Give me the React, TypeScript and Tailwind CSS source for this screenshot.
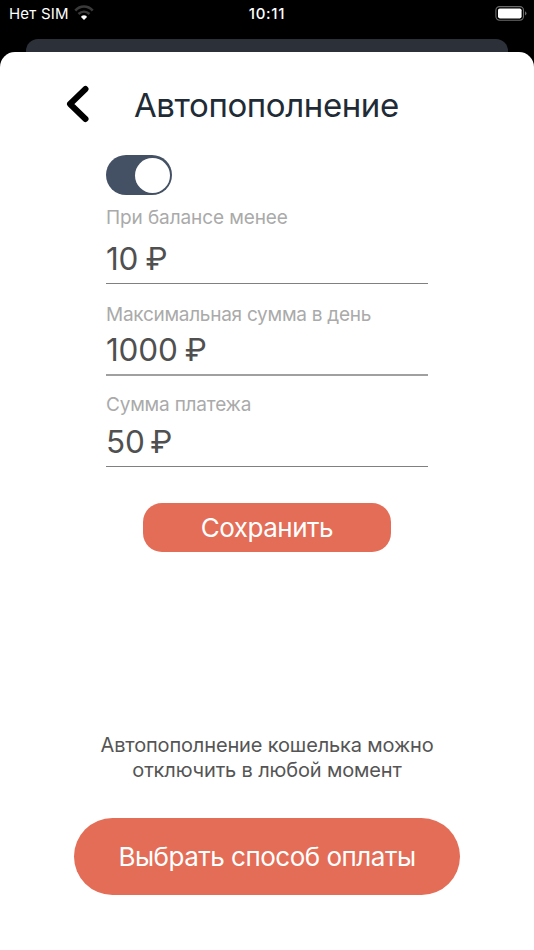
const fields = [
  {
    label: "При балансе менее",
    value: "10 ₽",
    labelClass: "h-[34px] tracking-[-0.1px]",
    valueClass: "h-12 pt-px [word-spacing:-1.5px]",
    lineClass: "mt-[1px] h-px bg-[#808080]",
    gapClass: "mt-[5px]",
  },
  {
    label: "Максимальная сумма в день",
    value: "1000 ₽",
    labelClass: "h-7 tracking-[-0.27px]",
    valueClass: "h-11 [word-spacing:-1.5px]",
    lineClass: "mt-[2px] h-[2px] bg-[#a0a0a0]",
    gapClass: "mt-4",
  },
  {
    label: "Сумма платежа",
    value: "50 ₽",
    labelClass: "h-7 tracking-[-0.2px]",
    valueClass: "h-[46px] pt-px [word-spacing:-3px]",
    lineClass: "mt-[2px] h-px bg-[#808080]",
    gapClass: "mt-[14px]",
  },
];

function StatusBar() {
  return (
    <div className="grid h-[39px] grid-cols-3 items-start pt-[4px] text-[15px] leading-5 text-white">
      <div className="flex items-start pl-[9px]">
        <span className="whitespace-nowrap tracking-[0.2px]">Нет SIM</span>
        <WifiIcon />
      </div>
      <div className="text-center font-medium tracking-[0.7px]">10:11</div>
      <div className="flex justify-end pt-[2px] pr-[7px]">
        <BatteryIcon />
      </div>
    </div>
  );
}

function WifiIcon() {
  return (
    <svg className="ml-[5px] mt-[1px]" width="20" height="16" viewBox="0 0 20 16" fill="none">
      <path d="M1.3 5.6C6.2.2 13.8.2 18.7 5.6" stroke="#3a3a3a" strokeWidth="2.6" />
      <path d="M4.5 9C7.8 5.9 12.2 5.9 15.5 9" stroke="#3a3a3a" strokeWidth="2.5" />
      <path d="M7 12Q7.3 10.3 10 10.3T13 12L10 15Z" fill="#fff" />
    </svg>
  );
}

function BatteryIcon() {
  return (
    <svg width="32" height="15" viewBox="0 0 32 15" fill="none">
      <rect x=".9" y=".6" width="27.6" height="13.6" rx="3.6" stroke="#6b6b6b" strokeWidth="1.1" />
      <rect x="3" y="2.4" width="23.6" height="10" rx="1.8" fill="#fff" />
      <path d="M30 5.2Q33 7.4 30 9.6Z" fill="#6b6b6b" />
    </svg>
  );
}

function Field({ field }: { field: (typeof fields)[number] }) {
  return (
    <div className={field.gapClass}>
      <div className={`flex items-center pt-[2px] text-[19px] text-[#aaaaaa] ${field.labelClass}`}>
        {field.label}
      </div>
      <div className={`flex items-center text-[31.5px] tracking-[-0.2px] text-[#505050] ${field.valueClass}`}>
        {field.value}
      </div>
      <div className={field.lineClass} />
    </div>
  );
}

export default function App() {
  return (
    <div className="flex h-[950px] w-[534px] flex-col overflow-hidden bg-black font-['Inter',sans-serif]">
      <StatusBar />

      {/* Card peeking out behind the sheet */}
      <div className="mx-[26px] h-[13px] shrink-0 rounded-t-[12px] bg-[#2c3038]" />

      <main className="flex flex-1 flex-col rounded-t-[15px] bg-white">
        <header className="flex h-[103px] items-center pl-[66px]">
          <button className="h-[38px] w-6">
            <svg width="24" height="38" viewBox="0 0 24 38" fill="none">
              <path
                d="M19.5 4L4 19L19.5 34"
                stroke="#000"
                strokeWidth="6"
                strokeLinecap="round"
                strokeLinejoin="round"
              />
            </svg>
          </button>
          <h1 className="ml-[44px] pt-[2px] text-[33px] leading-10 tracking-[-0.4px] text-[#212b36]">
            Автопополнение
          </h1>
        </header>

        <section className="ml-[106px] w-[322px]">
          <button className="flex h-10 w-[66px] items-center justify-end rounded-full bg-[#445164] pr-[2.5px]">
            <span className="size-[35px] rounded-full bg-white" />
          </button>
          {fields.map((field) => (
            <Field key={field.label} field={field} />
          ))}
        </section>

        <button className="mx-auto mt-9 h-[49px] w-[248.5px] rounded-[19px] bg-[#e46d57] text-[26px] tracking-[-0.5px] text-white">
          Сохранить
        </button>

        <p className="mt-auto text-center text-[20px] leading-[24.5px] tracking-[-0.15px] text-[#555555]">
          Автопополнение кошелька можно
          <br />
          отключить в любой момент
        </p>
        <button className="mx-auto mt-9 mb-[55px] h-[77px] w-[386.5px] rounded-full bg-[#e46d57] text-[26px] tracking-[-0.5px] text-white">
          Выбрать способ оплаты
        </button>
      </main>
    </div>
  );
}
